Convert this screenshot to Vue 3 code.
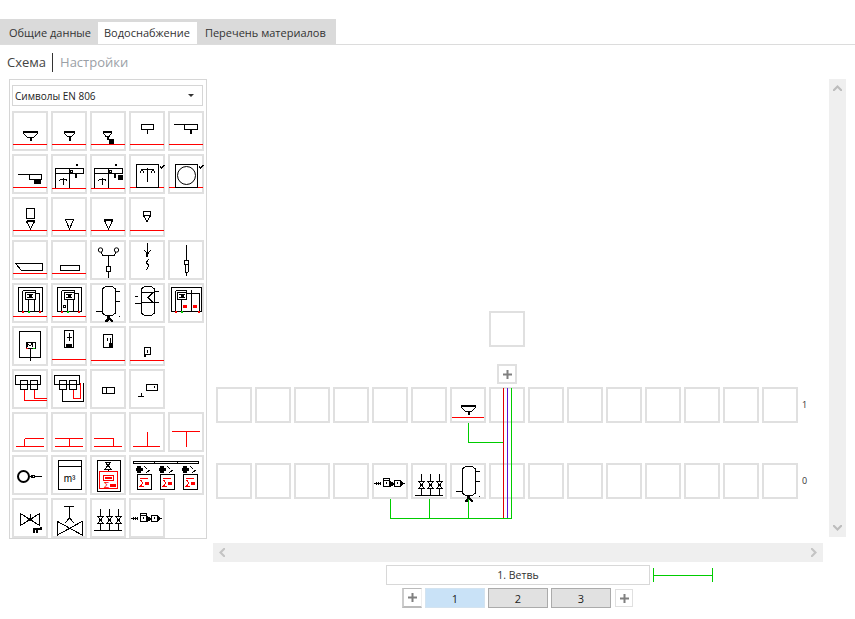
<script setup>
import { h } from 'vue'

// 1 символ = набор путей в координатах ячейки 36x40
// k - тонкая линия, b - толстая, f - заливка, r - красная линия, rf - красная заливка, gr - зелёная заливка
const RED = 'M1 33.5H35'
const RED_LOW = 'M1 34.5H35'
const bowV = (x) => `M${x}.5 11V18M${x - 3}.5 18.5H${x + 3}.5L${x - 3}.5 25.5H${x + 3}.5L${x - 3}.5 18.5M${x}.5 26V32`
const box = (x, y, w, h2) => `M${x}.5 ${y}.5h${w}v${h2}h-${w}z`

const bigFunnel = 'M11.5 20.5H25.5V22.5L21.5 26.5H15.5L11.5 22.5Z'
const midFunnel = 'M13.5 20.5H23.5V22.5L20.5 25.5H16.5L13.5 22.5Z'
const cabinet = 'M4.5 14.5H18.5V34.5H4.5ZM4.5 19.5H32.5M18.5 14.5H32.5V19.5M8.5 25.5H15.5M12.5 24V31M8.5 25.5V27M15.5 25.5V27M19 16.5h2v2h-2z'
const heater = 'M6.5 4.5H30.5V28.5H6.5ZM10.5 7.5H23.5V9M10.5 7.5V28M13.5 9.5H23.5V16.5H13.5ZM15 11.5H21L17.5 13L21 14.5H15M16.5 17V28M22.5 17V28M23.5 10.5H27.5V28'
const heaterDots = { rf: 'M10 28h2v2h-2zM27 28h2v2h-2z', gr: 'M16 28h2v2h-2z' }

const tank = {
  k: 'M15.5 3.5H22L25.5 6V30L22 32.5H15.5L12 30V6ZM25.5 8.5H30M25.5 18.5H30M6 28.5H12M29 33.5H30',
  f: 'M17 33h3v2l3 3v1h-2l-2-2l-2 2h-2v-1l2-3z'
}
const valves = { k: bowV(10) + bowV(19) + bowV(28) + 'M4 32.5H32' }
const chain = {
  k: 'M2 20.5H8M4 19V22M6 19V22M8 19V22' + box(11, 15, 6, 8) + 'M11.5 17.5H17.5' + box(22, 17, 6, 6) + 'M28 20.5H33',
  f: 'M18 18l4 2v2l-4 2zM29 18l3 2v1l-3 2zM14 19h1v2h-1zM25 19h1v2h-1z'
}
const check = 'M31 12l1.5 2l3-3'

const palette = [
  // ряд 1
  { k: bigFunnel, b: 'M18.5 27V30M11 21H26', r: RED },
  { k: midFunnel, b: 'M18.5 26V30M13 21H24', r: RED },
  { k: 'M13.5 20.5H21.5V22.5L19 25.5H16L13.5 22.5Z', b: 'M17.5 26V29M13 21H22', f: 'M19 28h5v5h-5z', r: RED },
  { k: box(12, 13, 12, 5) + 'M18.5 19V23', r: RED },
  { k: 'M6 13.5H29.5' + box(16, 13, 13, 5), b: 'M23 19V23', r: RED },
  // ряд 2
  { k: 'M6 20.5H29.5V25.5H17.5V20.5', f: 'M22 26h7v4h-7z', r: RED },
  { k: cabinet, b: 'M25 20V24M26 10V12', r: RED_LOW },
  { k: cabinet, b: 'M25 20V24M26 10V12', f: 'M28 21h5v5h-5z', r: RED_LOW },
  { k: 'M7.5 10.5H29.5V33.5H7.5ZM18.5 14V28M12 15.5H25M11 19L13 15.5L15 19M22 19L24 15.5L26 19' + check, r: 'M1 33.5H7M30 33.5H35' },
  { k: 'M7.5 10.5H29.5V33.5H7.5Z' + check, c: [18.5, 21.5, 9], r: 'M1 33.5H7M30 33.5H35' },
  // ряд 3
  { k: box(14, 11, 8, 10) + 'M14.5 24.5H22.5L18.5 32ZM14.5 23.5H22.5', r: RED },
  { k: 'M14.5 22.5H22.5L18.5 32Z', r: RED },
  { k: 'M14.5 23.5H22.5L18.5 32Z', b: 'M14 23H23', r: RED },
  { k: box(14, 14, 7, 4) + 'M14.5 18.5H21.5L18 25Z', r: RED },
  null,
  // ряд 4
  { k: 'M3.5 23.5H30.5V30.5H9.5Z', r: RED },
  { k: box(9, 25, 19, 5), r: RED },
  { k: 'M11 12L13 15.5H24L26 12M18.5 15V26M16.5 26.5H20.5V31L18.5 32L16.5 31ZM18.5 32V38', c: [10.5, 10, 2.2], c2: [26.5, 10, 2.2] },
  { k: 'M18.5 3V17M15 10L18.5 14L22 10M19.5 19L17 23L20 25L17.5 30', b: 'M18 12V17' },
  { k: 'M18.5 5V20' + box(16, 20, 4, 4) + 'M17 24.5V32L18.5 33L20 32V24.5M18.5 33V36' },
  // ряд 5
  { k: heater, ...heaterDots, r: RED },
  { k: heater + box(12, 22, 2, 2), ...heaterDots, r: RED },
  tank,
  { k: 'M15.5 3.5H22L25.5 6V30L22 32.5H15.5L12 30V6ZM25.5 8.5H30M25.5 19.5H30M6 13.5H9M6 20.5H12M12 9.5H24L19 14.5L24 19.5H12' },
  {
    k: 'M3.5 4.5H33.5V28.5H3.5ZM7.5 7.5H18.5V9M7.5 7.5V28M9.5 9.5H18.5V16.5H9.5ZM11 11.5H17L13.5 13L17 14.5H11M13.5 17V28M23.5 7V28M18.5 10.5H31V28',
    rf: 'M15 22h4v3h-4zM25 22h4v3h-4zM7 28h2v2h-2zM30 28h2v2h-2z',
    gr: 'M13 28h2v2h-2z'
  },
  // ряд 6
  {
    k: 'M7.5 5.5H28.5V31.5H7.5ZM18.5 23V35' + box(14, 16, 9, 6) + 'M15.5 21V17.5L18 20L20 17.5V21',
    rf: 'M14 22h2v1h-2z',
    gr: 'M21 22h2v1h-2z'
  },
  { k: 'M13.5 4.5H22.5V21.5H13.5ZM18.5 7V15M15.5 11H21', f: 'M15 18h6v3h-6z', r: RED },
  { k: 'M13.5 8.5H22.5V21.5H13.5ZM17 12V15M20.5 12V17', f: 'M19 17h4v5h-4z', r: RED_LOW },
  { k: 'M15.5 21.5H21.5V28.5H15.5ZM18.5 24V27', b: 'M15.5 28V31', r: RED_LOW },
  null,
  // ряд 7
  { k: 'M3.5 6.5H28.5V15.5H3.5ZM8.5 11.5H15.5V20.5H8.5ZM18.5 11.5H25.5V20.5H18.5Z', r: 'M12.5 21V31.5H35M22.5 21V29.5H35' },
  { k: 'M3.5 6.5H28.5V15.5H3.5ZM8.5 11.5H15.5V20.5H8.5ZM18.5 11.5H25.5V20.5H18.5ZM11.5 21V32.5H32.5V14', r: 'M22.5 21V29.5H29.5V14' },
  { k: box(12, 18, 12, 6) + 'M16.5 18V24' },
  { k: box(17, 15, 11, 6) + 'M9 27.5H15M12.5 24V28M25 17V19' },
  null,
  // ряд 8
  { r: 'M4 34.5H32M12.5 26.5V34M12.5 26.5H32' },
  { r: 'M4 34.5H32M4 26.5H32M18.5 27V34' },
  { r: 'M4 34.5H32M4 26.5H23.5V34' },
  { r: 'M4 34.5H31M18.5 20V34' },
  { r: 'M4 19.5H32M18.5 20V35' },
  // ряд 9
  { k: 'M22 21.5H30M23 20L19 21.5L23 23', b: 'M20 20V23', cT: [11.5, 21.5, 5.5] },
  { k: 'M7.5 5.5H30.5V34.5H7.5ZM7.5 11.5H30.5', text: { x: 18.5, y: 27, s: 10, v: 'm³' } },
  {
    k: 'M7.5 5.5H30.5V36.5H7.5ZM15 7H21L15 14H21ZM15 7L21 14M18.5 14V17',
    rk: 'M9.5 16.5H27.5V33.5H9.5ZM13.5 20.5H23.5V25H13.5Z',
    rtext: { x: 16.5, y: 33, s: 9, v: 'Σ' },
    rf: 'M15 22h7v2h-7zM20 29h6v3h-6z'
  },
  {
    wide: true,
    k: 'M4.5 6.5H69.5V8.5H4.5ZM25.5 6V9M48 6V9' +
      box(8, 19, 14, 15) + box(31, 19, 14, 15) + box(54, 19, 14, 15) +
      'M15 11l3 3M38 11l3 3M61 11l3 3M17 18l4-3M40 18l4-3M63 18l4-3',
    f: 'M8 11h4v2h2v3h-2v2h-4v-2h-1v-3h1zM31 11h4v2h2v3h-2v2h-4v-2h-1v-3h1zM54 11h4v2h2v3h-2v2h-4v-2h-1v-3h1z',
    rf: 'M11 23h8v1h-8zM34 23h8v1h-8zM57 23h8v1h-8zM16 27h4v3h-4zM39 27h4v3h-4zM62 27h4v3h-4z',
    rk: 'M11.5 25L14 28L11.5 31H15M34.5 25L37 28L34.5 31H38M57.5 25L60 28L57.5 31H61'
  },
  // ряд 10
  { k: 'M8.5 15.5L27.5 27.5V15.5L8.5 27.5ZM18 21.5V16', b: 'M22 35V31H25V35M25 31H29V29', f: 'M16 20h4v3h-4z' },
  { k: 'M13 8.5H23M18.5 9V20M6.5 23.5L31 37V23.5L6.5 37ZM14 25L18.5 20L23 25' },
  valves,
  chain
]

// отрисовка символа, палитра и схема используют один и тот же компонент
const Sym = (props) => {
  const s = props.s
  const w = s.wide ? 75 : 36
  const kids = []
  const line = (d, stroke, width = 1) =>
    d && kids.push(h('path', { d, stroke, 'stroke-width': width, fill: 'none' }))
  const fill = (d, color) => d && kids.push(h('path', { d, fill: color }))
  const circle = (c, sw = 1) =>
    c && kids.push(h('circle', { cx: c[0], cy: c[1], r: c[2], stroke: '#000', 'stroke-width': sw, fill: 'none', 'shape-rendering': 'auto' }))
  const text = (t, color) =>
    t && kids.push(h('text', { x: t.x, y: t.y, 'font-size': t.s, fill: color, 'text-anchor': 'middle', 'font-family': 'Liberation Sans, sans-serif' }, t.v))
  line(s.k, '#000')
  line(s.b, '#000', 2)
  fill(s.f, '#000')
  line(s.rk, '#f00')
  fill(s.rf, '#f00')
  fill(s.gr, '#0c0')
  line(s.r, '#f00')
  circle(s.c)
  circle(s.c2)
  circle(s.cT, 2)
  text(s.text, '#000')
  text(s.rtext, '#f00')
  return h('svg', { width: w, height: 40, viewBox: `0 0 ${w} 40`, 'shape-rendering': 'crispEdges', style: 'display:block' }, kids)
}
Sym.props = ['s']

const funnelOnScheme = {
  k: 'M11.5 18.5H25.5V20.5L21.5 24.5H15.5L11.5 20.5Z',
  b: 'M18.5 25V28M11 19H26',
  r: 'M2 30.5H34'
}

const columns = Array.from({ length: 15 }, (_, i) => i)
const upperRow = { 6: funnelOnScheme }
const lowerRow = { 4: chain, 5: valves, 6: tank }
const pages = ['1', '2', '3']
</script>

<template>
  <div class="page">
    <div class="tabs">
      <div class="tab">Общие данные</div>
      <div class="tab active">Водоснабжение</div>
      <div class="tab">Перечень материалов</div>
    </div>

    <div class="subnav">
      <span class="sub-current">Схема</span>
      <span class="sub-other">Настройки</span>
    </div>

    <div class="workspace">
      <aside class="panel">
        <div class="select">
          <span>Символы EN 806</span>
          <i class="caret"></i>
        </div>
        <div class="palette">
          <template v-for="(s, i) in palette" :key="i">
            <div v-if="s" class="cell" :class="{ wide: s.wide }"><Sym :s="s" /></div>
            <div v-else></div>
          </template>
        </div>
      </aside>

      <section class="right">
        <div class="view">
          <div class="canvas">
            <div class="row">
              <div class="cell square" style="grid-column: 8"></div>
            </div>
            <div class="row plus-row">
              <button class="plus-btn" style="grid-column: 8">
                <svg width="9" height="9" viewBox="0 0 9 9"><path d="M3.5 0h2v3.5H9v2H5.5V9h-2V5.5H0v-2h3.5z" fill="#808080" /></svg>
              </button>
            </div>
            <div class="row">
              <div v-for="c in columns" :key="c" class="cell square">
                <Sym v-if="upperRow[c]" :s="upperRow[c]" />
              </div>
              <span class="level">1</span>
            </div>
            <div class="row lower">
              <div v-for="c in columns" :key="c" class="cell square">
                <Sym v-if="lowerRow[c]" :s="lowerRow[c]" />
              </div>
              <span class="level">0</span>
            </div>

            <!-- трубы поверх ячеек -->
            <svg class="pipes" width="610" height="458" shape-rendering="crispEdges" fill="none">
              <path d="M290.5 309V439" stroke="#e00000" />
              <path d="M294.5 309V439" stroke="#5a14d8" />
              <path d="M298.5 309V439.5H177.5V420M216.5 420V439M255.5 420V439M255.5 344V363.5H290" stroke="#00cc00" />
            </svg>
          </div>
          <div class="vscroll">
            <svg width="9" height="6" viewBox="0 0 9 6"><path d="M4.5 0L9 4.5V6H7.5L4.5 3L1.5 6H0V4.5Z" fill="#bdbdbd" /></svg>
            <svg width="9" height="6" viewBox="0 0 9 6"><path d="M4.5 6L0 1.5V0H1.5L4.5 3L7.5 0H9V1.5Z" fill="#bdbdbd" /></svg>
          </div>
        </div>

        <div class="hscroll">
          <svg width="6" height="9" viewBox="0 0 6 9"><path d="M0 4.5L4.5 0H6V1.5L3 4.5L6 7.5V9H4.5Z" fill="#c4c4c4" /></svg>
          <svg width="6" height="9" viewBox="0 0 6 9"><path d="M6 4.5L1.5 0H0V1.5L3 4.5L0 7.5V9H1.5Z" fill="#c4c4c4" /></svg>
        </div>

        <div class="branch">
          <div class="branch-name">1. Ветвь</div>
          <svg width="60" height="14" shape-rendering="crispEdges" fill="none" stroke="#00cc00">
            <path d="M0.5 0V14M0.5 7.5H59.5M59.5 0V14" />
          </svg>
        </div>

        <div class="pager">
          <button class="plus-btn left">
            <svg width="9" height="9" viewBox="0 0 9 9"><path d="M3.5 0h2v3.5H9v2H5.5V9h-2V5.5H0v-2h3.5z" fill="#808080" /></svg>
          </button>
          <button v-for="(p, i) in pages" :key="p" class="page-btn" :class="{ current: i === 0 }">{{ p }}</button>
          <button class="plus-btn right">
            <svg width="9" height="9" viewBox="0 0 9 9"><path d="M3.5 0h2v3.5H9v2H5.5V9h-2V5.5H0v-2h3.5z" fill="#808080" /></svg>
          </button>
        </div>
      </section>
    </div>
  </div>
</template>

<style>
html,
body {
  margin: 0;
  background: #fff;
  overflow: hidden;
}
</style>

<style scoped>
.page {
  width: 855px;
  height: 619px;
  padding-top: 19px;
  box-sizing: border-box;
  overflow: hidden;
  font-family: "Open Sans", "Liberation Sans", sans-serif;
  color: #222;
}

.tabs {
  display: flex;
  align-items: flex-end;
  height: 25px;
  border-bottom: 1px solid #dcdcdc;
}

.tab {
  height: 25px;
  padding: 3px 8px 0;
  box-sizing: border-box;
  background: #dadada;
  font-size: 11px;
  line-height: 22px;
  color: #333;
}

.tab:first-child {
  padding-left: 9px;
}

.tab:last-child {
  padding-right: 10px;
}

.tab.active {
  height: 22px;
  padding: 0 7px 0 6px;
  margin-left: -1px;
  background: #fff;
  box-shadow: 0 -3px 0 #dadada;
}

.subnav {
  display: flex;
  align-items: center;
  height: 34px;
  padding-left: 7px;
  font-size: 13px;
}

.sub-current {
  padding-right: 6px;
  border-right: 1px solid #333;
  height: 19px;
  line-height: 18px;
  color: #444;
}

.sub-other {
  padding-left: 7px;
  color: #9aa0a6;
}

.workspace {
  display: flex;
  gap: 6px;
  padding-left: 9px;
}

.panel {
  width: 198px;
  height: 460px;
  box-sizing: border-box;
  border: 1px solid #d6d6d6;
  padding: 5px 2px;
}

.select {
  display: flex;
  align-items: center;
  justify-content: space-between;
  width: 191px;
  height: 21px;
  box-sizing: border-box;
  border: 1px solid #d6d6d6;
  padding: 0 8px 0 2px;
  margin-bottom: 5px;
  font-size: 10px;
  color: #222;
}

.caret {
  width: 0;
  height: 0;
  border-left: 3px solid transparent;
  border-right: 3px solid transparent;
  border-top: 3px solid #333;
}

.palette {
  display: grid;
  grid-template-columns: repeat(5, 36px);
  grid-auto-rows: 40px;
  gap: 3px;
}

.cell {
  box-sizing: border-box;
  border: 2px solid #e0e0e0;
  background: #fff;
}

.cell :deep(svg) {
  margin: -2px;
}

.cell.wide {
  grid-column: span 2;
}

.cell.square {
  width: 36px;
  height: 36px;
}

.right {
  width: 633px;
}

.view {
  display: flex;
  gap: 6px;
  height: 458px;
}

.canvas {
  position: relative;
  width: 610px;
  padding: 232px 0 0 3px;
  box-sizing: border-box;
}

.row {
  display: grid;
  grid-template-columns: repeat(15, 36px) 20px;
  gap: 3px;
  height: 36px;
}

.plus-row {
  height: 20px;
  margin: 17px 0 3px;
}

.lower {
  margin-top: 40px;
}

.plus-btn {
  display: flex;
  align-items: center;
  justify-content: center;
  width: 20px;
  height: 20px;
  padding: 0;
  border: 2px solid #e0e0e0;
  background: #fff;
  justify-self: center;
}

.level {
  font-size: 9px;
  line-height: 36px;
  color: #333;
  padding-left: 1px;
}

.pipes {
  position: absolute;
  top: 0;
  left: 0;
  pointer-events: none;
}

.vscroll {
  display: flex;
  flex-direction: column;
  align-items: center;
  justify-content: space-between;
  width: 17px;
  padding: 6px 0;
  box-sizing: border-box;
  background: #efefef;
}

.hscroll {
  display: flex;
  align-items: center;
  justify-content: space-between;
  width: 610px;
  height: 19px;
  margin-top: 6px;
  padding: 0 6px;
  box-sizing: border-box;
  background: #efefef;
}

.branch {
  display: flex;
  align-items: center;
  gap: 3px;
  margin: 3px 0 0 173px;
}

.branch-name {
  width: 264px;
  height: 20px;
  box-sizing: border-box;
  border: 1px solid #d8d8d8;
  font-size: 10.5px;
  line-height: 18px;
  text-align: center;
  color: #333;
}

.pager {
  display: flex;
  align-items: center;
  gap: 3px;
  margin: 3px 0 0 189px;
}

.plus-btn.left {
  border-width: 1px 1px 2px 2px;
  border-color: #bbb #eee #bbb #ccc;
}

.plus-btn.right {
  width: 18px;
  height: 18px;
  border-width: 1px;
  margin-left: 1px;
}

.page-btn {
  width: 60px;
  height: 20px;
  padding: 0;
  box-sizing: border-box;
  border: 1px solid #ababab;
  background: #e1e1e1;
  font-family: "Open Sans", "Liberation Sans", sans-serif;
  font-size: 11px;
  color: #222;
}

.page-btn.current {
  border-color: #d3e3f0;
  background: #c9e2f7;
}
</style>
